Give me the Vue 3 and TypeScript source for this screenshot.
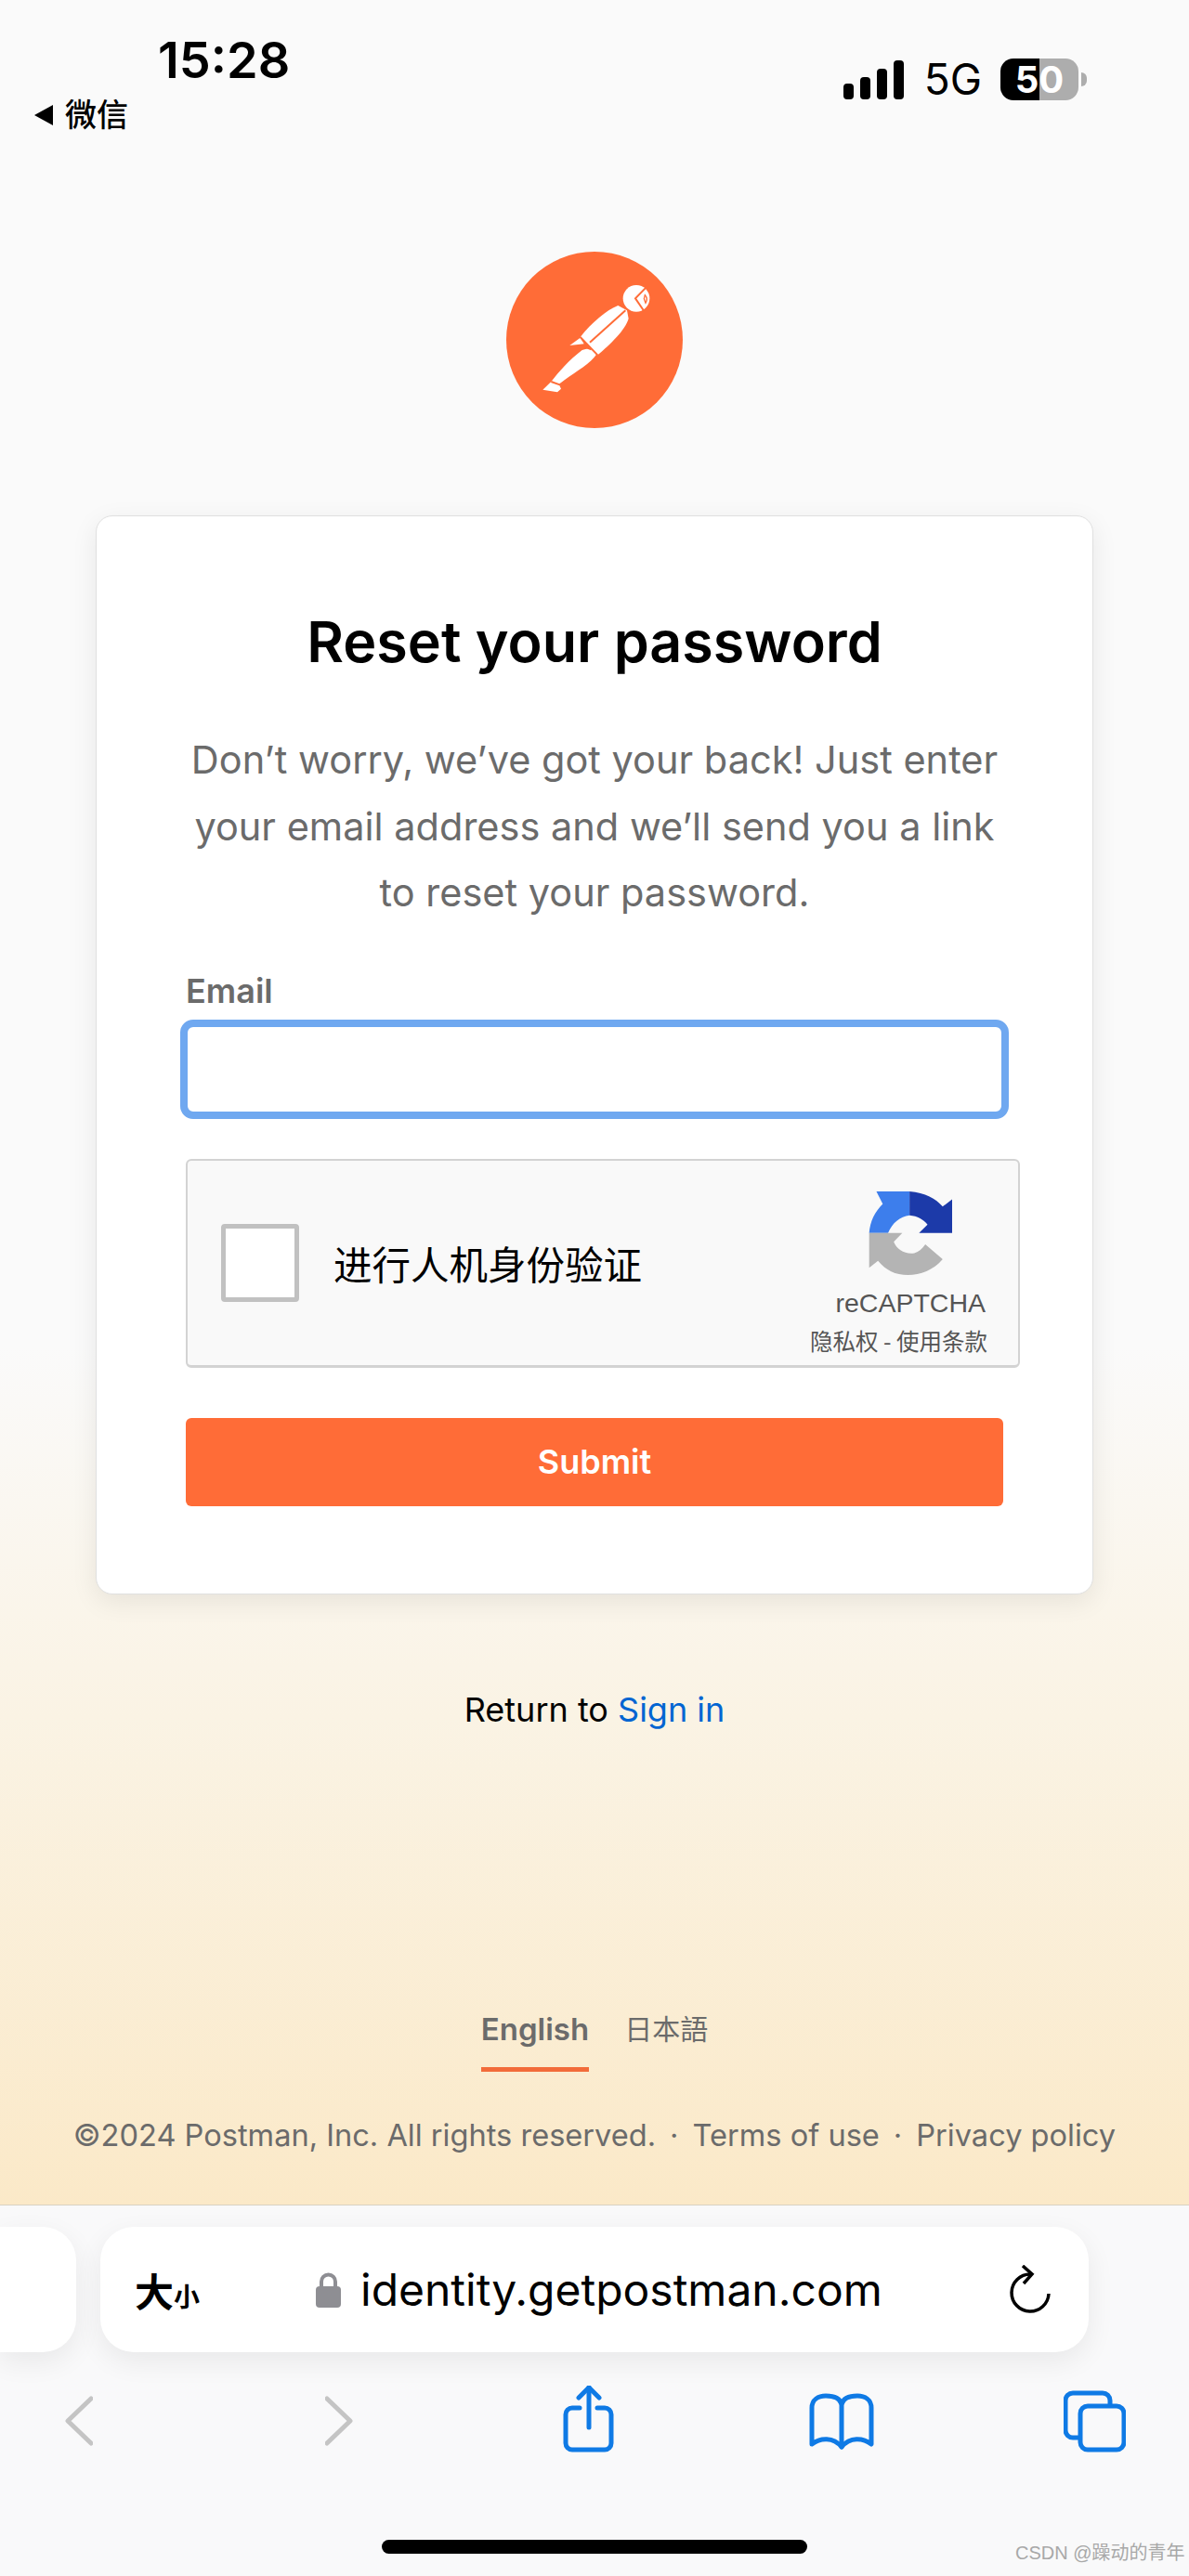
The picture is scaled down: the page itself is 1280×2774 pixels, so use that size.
<script setup lang="ts">
const footerLinks = ['Terms of use', 'Privacy policy']
</script>

<template>
  <div class="page">
    <main class="web">
      <header class="status">
        <div class="status-left">
          <div class="time">15:28</div>
          <div class="carrier"><span class="back-arrow"></span>微信</div>
        </div>
        <div class="status-right">
          <svg class="signal" width="66" height="42" viewBox="0 0 66 42">
            <rect x="0" y="25" width="11" height="17" rx="4" />
            <rect x="18" y="18" width="11" height="24" rx="4" />
            <rect x="36" y="9" width="11" height="33" rx="4" />
            <rect x="54" y="0" width="11" height="42" rx="4" />
          </svg>
          <span class="net">5G</span>
          <div class="battery"><span>50</span></div>
          <span class="nub"></span>
        </div>
      </header>

      <svg class="logo" width="190" height="190" viewBox="195 92 570 570">
        <circle cx="480" cy="377" r="285" fill="#ff6c37" />
        <g fill="#fff">
          <circle cx="615" cy="243" r="43" />
          <path d="M556 266C520 280 470 322 434 368L490 426C530 392 580 345 590 308L585 282Z" />
          <path d="M400 395L434 370L446 390Z" />
          <path d="M440 410L470 402L486 424C470 450 420 480 385 505L365 520L372 535L360 546L313 538L340 512C365 480 400 440 440 410Z" />
        </g>
        <g fill="none" stroke="#ff6c37" stroke-width="6">
          <path d="M650 204L612 243L640 284" />
          <path d="M643 232C650 240 650 250 645 258L640 244Z" stroke-width="4" />
          <path d="M580 282L465 385" />
          <path d="M434 368L490 426" />
          <path d="M445 398L470 408" />
          <path d="M340 512L368 522" />
        </g>
      </svg>

      <section class="card">
        <h1 class="title">Reset your password</h1>
        <p class="intro">
          Don’t worry, we’ve got your back! Just enter your email address and we’ll send you a link to reset your
          password.
        </p>
        <label class="label" for="email">Email</label>
        <input id="email" class="input" type="email" />

        <div class="captcha">
          <span class="check"></span>
          <span class="captcha-text">进行人机身份验证</span>
          <div class="captcha-brand">
            <svg class="captcha-icon" width="90" height="90" viewBox="285 130 265 265">
              <path fill="#3d7eec" d="M310 130L415 130L415 206C385 210 360 230 347 262L287 262C290 225 305 195 330 170Z" />
              <path fill="#1c3aa9" d="M415 130C465 135 498 152 520 178L550 155L550 262L445 262L472 235C460 220 440 208 415 206Z" />
              <path fill="#b4b4b4" d="M287 262L392 262L365 290C375 315 400 330 430 326C445 322 455 312 465 298L520 345C490 380 450 395 410 395C370 395 340 380 315 350L287 372Z" />
            </svg>
            <div class="captcha-name">reCAPTCHA</div>
            <div class="captcha-links">隐私权 - 使用条款</div>
          </div>
        </div>

        <button class="submit" type="button">Submit</button>
      </section>

      <p class="return">Return to <a class="signin">Sign in</a></p>

      <div class="spacer"></div>

      <nav class="langs">
        <span class="lang active">English</span>
        <span class="lang cjk">日本語</span>
      </nav>
      <footer class="legal">
        <span>©2024 Postman, Inc. All rights reserved.</span>
        <template v-for="link in footerLinks" :key="link">
          <span class="dot">·</span>
          <span>{{ link }}</span>
        </template>
      </footer>
    </main>

    <section class="browser">
      <div class="pills">
        <div class="pill-side"></div>
        <div class="pill">
          <span class="aa">大<small>小</small></span>
          <svg class="lock" width="27" height="38" viewBox="0 0 27 38">
            <path d="M6 17V10a7.500 7.500 0 0 1 15 0v7" fill="none" stroke="#8e8e93" stroke-width="4" />
            <rect x="0" y="15" width="27" height="23" rx="4" fill="#8e8e93" />
          </svg>
          <span class="url">identity.getpostman.com</span>
          <svg class="reload" width="46" height="54" viewBox="0 0 46 54" fill="none" stroke="#000" stroke-width="3.500">
            <path d="M23 10A20 20 0 1 0 43 31" />
            <path d="M15 1L25 10L16 20" />
          </svg>
        </div>
      </div>

      <div class="toolbar">
        <svg class="tool" width="30" height="72" viewBox="0 0 30 72" fill="none" stroke="#c4c4c4" stroke-width="5" stroke-linecap="round" stroke-linejoin="round">
          <path d="M28 14L3 38L28 62" />
        </svg>
        <svg class="tool" width="30" height="72" viewBox="0 0 30 72" fill="none" stroke="#c4c4c4" stroke-width="5" stroke-linecap="round" stroke-linejoin="round">
          <path d="M2 14L27 38L2 62" />
        </svg>
        <svg class="tool" width="56" height="72" viewBox="0 0 56 72" fill="none" stroke="#0f7ae5" stroke-width="5" stroke-linecap="round" stroke-linejoin="round">
          <path d="M18 24H10a7 7 0 0 0-7 7v31a7 7 0 0 0 7 7h35a7 7 0 0 0 7-7V31a7 7 0 0 0-7-7h-8" />
          <path d="M28 2V45" />
          <path d="M17 13L28 2L39 13" />
        </svg>
        <svg class="tool" width="70" height="72" viewBox="0 0 70 72" fill="none" stroke="#0f7ae5" stroke-width="5" stroke-linecap="round" stroke-linejoin="round">
          <path d="M35 20C33 12 24 11 18 11C10 11 3 15 3 24V63C12 56 26 55 35 66C44 55 58 56 67 63V24C67 15 60 11 52 11C46 11 37 12 35 20Z" />
          <path d="M35 20V66" />
        </svg>
        <svg class="tool" width="67" height="72" viewBox="0 0 67 72" fill="none" stroke="#0f7ae5" stroke-width="5" stroke-linejoin="round">
          <path d="M16 56H10a8 8 0 0 1-8-8V16a8 8 0 0 1 8-8h32a8 8 0 0 1 8 8v6" />
          <rect x="18" y="22" width="47" height="47" rx="8" />
        </svg>
      </div>

      <div class="home-row">
        <div class="home"></div>
        <span class="mark">CSDN @躁动的青年</span>
      </div>
    </section>
  </div>
</template>

<style scoped>
.page {
  width: 1280px;
  height: 2774px;
  display: flex;
  flex-direction: column;
  overflow: hidden;
  font-family: Inter, "Noto Sans CJK SC", sans-serif;
  color: #000;
}

.web {
  height: 2374px;
  flex: none;
  display: flex;
  flex-direction: column;
  align-items: center;
  background: linear-gradient(180deg, #fafafa 0, #fafafa 1450px, #faf3e4 1850px, #fbe9c8 2374px);
}

.status {
  width: 100%;
  height: 271px;
  flex: none;
  display: flex;
  justify-content: space-between;
  align-items: flex-start;
}

.status-left {
  padding: 36px 0 0 37px;
}

.time {
  margin-left: 133px;
  font-size: 54px;
  line-height: 58px;
  font-weight: 600;
}

.carrier {
  margin-top: 8px;
  font-size: 34px;
  line-height: 44px;
  font-weight: 500;
  display: flex;
  align-items: center;
  gap: 13px;
}

.back-arrow {
  width: 0;
  height: 0;
  border-top: 11px solid transparent;
  border-bottom: 11px solid transparent;
  border-right: 20px solid #000;
}

.status-right {
  display: flex;
  align-items: center;
  padding: 63px 110px 0 0;
}

.signal {
  fill: #000;
}

.net {
  margin-left: 21px;
  font-size: 46px;
  line-height: 45px;
}

.battery {
  margin-left: 20px;
  width: 84px;
  height: 45px;
  border-radius: 14px;
  background: linear-gradient(90deg, #000 0, #000 42px, #adadad 42px);
  color: #fff;
  text-align: center;
  font-size: 40px;
  line-height: 45px;
  font-weight: 700;
}

.nub {
  margin-left: 3px;
  width: 6px;
  height: 15px;
  border-radius: 0 6px 6px 0;
  background: #adadad;
}

.logo {
  flex: none;
  display: block;
}

.card {
  margin-top: 94px;
  box-sizing: border-box;
  width: 1074px;
  height: 1162px;
  flex: none;
  padding: 0 96px;
  background: #fff;
  border: 1px solid #e0e0e0;
  border-radius: 18px;
  box-shadow: 0 8px 28px rgba(0, 0, 0, 0.08);
}

.title {
  margin: 99px 0 0;
  text-align: center;
  font-size: 61px;
  line-height: 72px;
  font-weight: 600;
}

.intro {
  margin: 56px auto 0;
  width: 880px;
  text-align: center;
  font-size: 41.500px;
  line-height: 71.500px;
  color: #6b6b6b;
}

.label {
  display: block;
  margin-top: 47px;
  font-size: 36px;
  line-height: 44px;
  font-weight: 600;
  color: #6b6b6b;
}

.input {
  display: block;
  box-sizing: border-box;
  margin: 9px 0 0 -6px;
  width: 892px;
  height: 107px;
  background: #fff;
  border: 8px solid #6fa8f0;
  border-radius: 14px;
  outline: none;
}

.captcha {
  box-sizing: border-box;
  margin-top: 43px;
  width: 898px;
  height: 225px;
  display: flex;
  align-items: center;
  padding: 0 33px 0 36px;
  background: #f9f9f9;
  border: 2px solid #d3d3d3;
  border-bottom-width: 3px;
  border-radius: 6px;
}

.check {
  flex: none;
  box-sizing: border-box;
  width: 84px;
  height: 84px;
  background: #fff;
  border: 5px solid #c1c1c1;
  border-radius: 4px;
}

.captcha-text {
  margin-left: 37px;
  font-size: 41.500px;
  color: #000;
  font-family: "Noto Sans CJK SC", sans-serif;
}

.captcha-brand {
  margin-left: auto;
  align-self: flex-start;
  padding-top: 33px;
  display: flex;
  flex-direction: column;
  align-items: flex-end;
}

.captcha-icon {
  display: block;
  margin-right: 38px;
}

.captcha-name {
  margin-top: 11px;
  padding-right: 2px;
  font-family: "Liberation Sans", sans-serif;
  font-size: 28.500px;
  line-height: 38px;
  color: #555;
}

.captcha-links {
  margin-top: 5px;
  font-family: "Noto Sans CJK SC", sans-serif;
  font-size: 24.500px;
  line-height: 34px;
  color: #555;
}

.submit {
  display: block;
  margin-top: 54px;
  width: 880px;
  height: 95px;
  border: 0;
  border-radius: 6px;
  background: #ff6c37;
  color: #fff;
  font-family: inherit;
  font-size: 36px;
  font-weight: 600;
}

.return {
  margin: 97px 0 0;
  font-size: 36px;
  line-height: 54px;
  flex: none;
}

.signin {
  color: #0265d2;
}

.spacer {
  flex: 1;
}

.langs {
  display: flex;
  gap: 38px;
  font-size: 33px;
}

.lang {
  padding-bottom: 18px;
  line-height: 46px;
  color: #6b6b6b;
  border-bottom: 5px solid transparent;
}

.lang.cjk {
  font-size: 30px;
}

.lang.active {
  font-weight: 600;
  border-bottom-color: #f26b3a;
}

.legal {
  margin: 45px 0 52px;
  display: flex;
  gap: 15px;
  font-size: 32.600px;
  line-height: 46px;
  color: #6b6b6b;
}

.browser {
  flex: 1;
  position: relative;
  background: #f9f9fa;
  border-top: 1px solid #d8d2c2;
}

.pills {
  margin-top: 23px;
  display: flex;
  gap: 26px;
  height: 135px;
}

.pill-side,
.pill {
  background: #fff;
  box-shadow: 0 10px 30px rgba(0, 0, 0, 0.07);
}

.pill-side {
  width: 82px;
  border-radius: 0 36px 36px 0;
}

.pill {
  width: 1064px;
  border-radius: 36px;
  display: flex;
  align-items: center;
}

.aa {
  margin-left: 37px;
  width: 195px;
  font-size: 42px;
  font-weight: 700;
  font-family: "Noto Sans CJK SC", sans-serif;
}

.aa small {
  font-size: 28px;
}

.lock {
  flex: none;
}

.url {
  margin-left: 21px;
  font-size: 48px;
  letter-spacing: 0;
}

.reload {
  margin-left: auto;
  margin-right: 40px;
}

.toolbar {
  margin-top: 36px;
  display: flex;
  padding-left: 70px;
}

.tool {
  flex: none;
  display: block;
}

.tool:nth-child(2) {
  margin-left: 250px;
}

.tool:nth-child(3) {
  margin-left: 226px;
}

.tool:nth-child(4) {
  margin-left: 209px;
}

.tool:nth-child(5) {
  margin-left: 204px;
}

.home-row {
  margin-top: 94px;
  padding-left: 411px;
  display: flex;
  align-items: flex-start;
}

.home {
  width: 458px;
  height: 15px;
  border-radius: 8px;
  background: #000;
}

.mark {
  margin: 1px 0 0 224px;
  white-space: nowrap;
  font-size: 20px;
  line-height: 26px;
  color: #a8a8a8;
  font-family: "Liberation Sans", "Noto Sans CJK SC", sans-serif;
}
</style>
